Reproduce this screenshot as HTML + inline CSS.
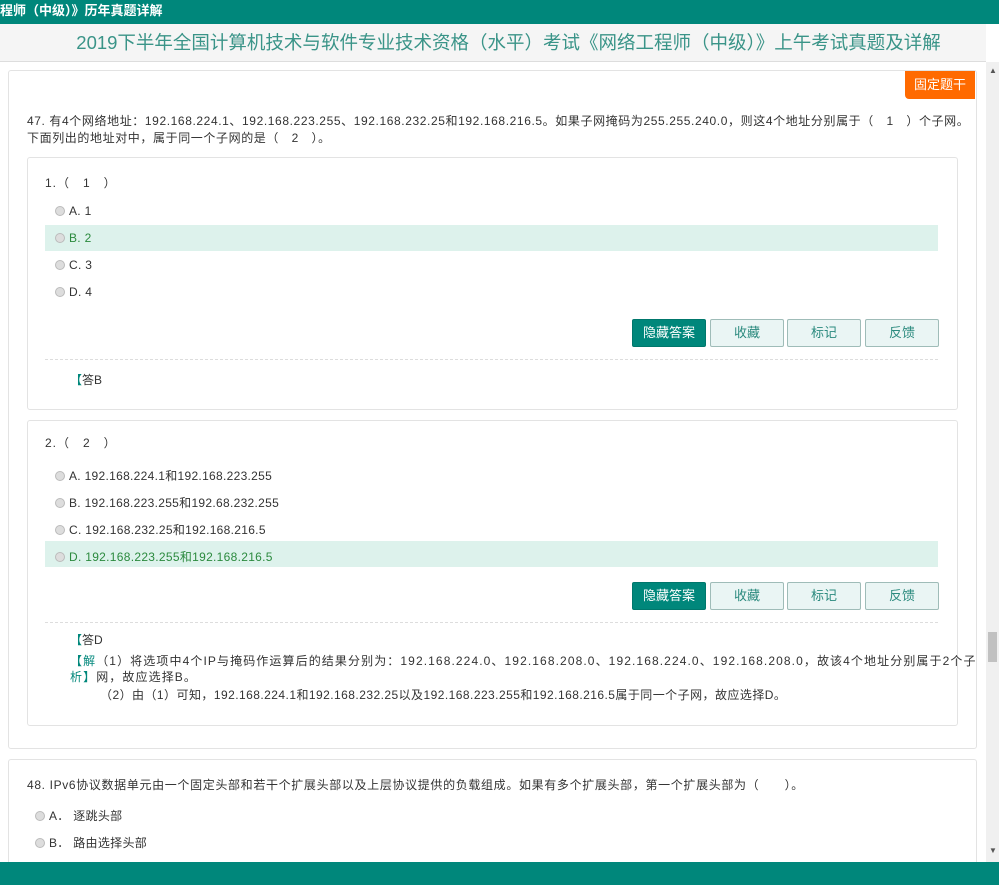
<!DOCTYPE html>
<html><head><meta charset="utf-8"><style>
*{margin:0;padding:0;box-sizing:border-box}
body{width:999px;height:885px;overflow:hidden;background:#fff;font-family:"Liberation Sans","Noto Sans CJK SC",sans-serif;font-size:12px;color:#333;position:relative}
.a{position:absolute;white-space:nowrap}
.top{left:0;top:0;width:999px;height:24px;background:#00877b;color:#fff;font-size:13px;line-height:22px;font-weight:bold}
.tb{left:0;top:24px;width:986px;height:38px;background:#f5f5f5;border-bottom:1px solid #ddd;overflow:hidden}
.tt{left:0;top:0;width:1017px;text-align:center;font-size:18.5px;line-height:38px;color:#3a9488}
.sb{left:986px;top:62px;width:13px;height:800px;background:#f0f0f0}
.card{border:1px solid #e3e3e3;border-radius:3px;background:#fff}
.hl{background:#ddf2ec}
.btn{height:28px;width:74px;border:1px solid #9fbcb8;background:#eaf5f4;color:#2b8a7e;text-align:center;line-height:26px;font-size:13px;border-radius:2px}
.btn.p{background:#00877b;color:#fff;border-color:#00776c}
.r{display:inline-block;width:10px;height:10px;border-radius:50%;background:#ddd;border:1px solid #bbb;vertical-align:-1px;margin-right:4px}
.dash{height:0;border-top:1px dashed #ddd}
.g{color:#2b8a3e}
.t{color:#00877b}
.o{letter-spacing:0.3px}
</style></head><body>
<div class="a top">程师（中级）》历年真题详解</div>
<div class="a tb"><div class="a tt">2019下半年全国计算机技术与软件专业技术资格（水平）考试《网络工程师（中级）》上午考试真题及详解</div></div>
<div class="a sb"><div class="a" style="left:2px;top:570px;width:9px;height:30px;background:#c1c1c1"></div><div class="a" style="left:3px;top:4px;font-size:8px;color:#555">▲</div><div class="a" style="left:3px;top:784px;font-size:8px;color:#555">▼</div></div>

<div class="a card" style="left:8px;top:70px;width:969px;height:679px"></div>
<div class="a" style="left:905px;top:71px;width:70px;height:28px;background:#ff6a00;color:#fff;border-radius:0 0 0 4px;text-align:center;line-height:28px;font-size:13px">固定题干</div>
<div class="a" style="left:27px;top:113px;line-height:17px;letter-spacing:0.6px">47. 有4个网络地址：192.168.224.1、192.168.223.255、192.168.232.25和192.168.216.5。如果子网掩码为255.255.240.0，则这4个地址分别属于（　1　）个子网。<br>下面列出的地址对中，属于同一个子网的是（　2　）。</div>

<div class="a card" style="left:27px;top:157px;width:931px;height:253px"></div>
<div class="a" style="left:45px;top:174px;letter-spacing:1px">1.（　1　）</div>
<div class="a o" style="left:55px;top:204px"><span class="r"></span>A. 1</div>
<div class="a hl" style="left:45px;top:225px;width:893px;height:26px"></div>
<div class="a g o" style="left:55px;top:231px"><span class="r"></span>B. 2</div>
<div class="a o" style="left:55px;top:258px"><span class="r"></span>C. 3</div>
<div class="a o" style="left:55px;top:285px"><span class="r"></span>D. 4</div>
<div class="a btn p" style="left:632px;top:319px">隐藏答案</div>
<div class="a btn" style="left:710px;top:319px">收藏</div>
<div class="a btn" style="left:787px;top:319px">标记</div>
<div class="a btn" style="left:865px;top:319px">反馈</div>
<div class="a dash" style="left:45px;top:359px;width:893px"></div>
<div class="a" style="left:70px;top:371px"><span class="t">【</span>答B</div>

<div class="a card" style="left:27px;top:420px;width:931px;height:306px"></div>
<div class="a" style="left:45px;top:434px;letter-spacing:1px">2.（　2　）</div>
<div class="a o" style="left:55px;top:467px"><span class="r"></span>A. 192.168.224.1和192.168.223.255</div>
<div class="a o" style="left:55px;top:494px"><span class="r"></span>B. 192.168.223.255和192.68.232.255</div>
<div class="a o" style="left:55px;top:521px"><span class="r"></span>C. 192.168.232.25和192.168.216.5</div>
<div class="a hl" style="left:45px;top:541px;width:893px;height:26px"></div>
<div class="a g o" style="left:55px;top:548px"><span class="r"></span>D. 192.168.223.255和192.168.216.5</div>
<div class="a btn p" style="left:632px;top:582px">隐藏答案</div>
<div class="a btn" style="left:710px;top:582px">收藏</div>
<div class="a btn" style="left:787px;top:582px">标记</div>
<div class="a btn" style="left:865px;top:582px">反馈</div>
<div class="a dash" style="left:45px;top:622px;width:893px"></div>
<div class="a" style="left:70px;top:631px"><span class="t">【</span>答D</div>
<div class="a" style="left:70px;top:652px;letter-spacing:1.1px"><span class="t">【解</span>（1）将选项中4个IP与掩码作运算后的结果分别为：192.168.224.0、192.168.208.0、192.168.224.0、192.168.208.0，故该4个地址分别属于2个子</div>
<div class="a" style="left:70px;top:668px;letter-spacing:1.1px"><span class="t">析】</span>网，故应选择B。</div>
<div class="a" style="left:100px;top:686px;letter-spacing:0.45px">（2）由（1）可知，192.168.224.1和192.168.232.25以及192.168.223.255和192.168.216.5属于同一个子网，故应选择D。</div>

<div class="a card" style="left:8px;top:759px;width:969px;height:120px"></div>
<div class="a" style="left:27px;top:776px;letter-spacing:0.65px">48. IPv6协议数据单元由一个固定头部和若干个扩展头部以及上层协议提供的负载组成。如果有多个扩展头部，第一个扩展头部为（　　）。</div>
<div class="a o" style="left:35px;top:807px"><span class="r"></span>A．  逐跳头部</div>
<div class="a o" style="left:35px;top:834px"><span class="r"></span>B．  路由选择头部</div>
<div class="a" style="left:0;top:862px;width:999px;height:23px;background:#00877b"></div>
</body></html>
